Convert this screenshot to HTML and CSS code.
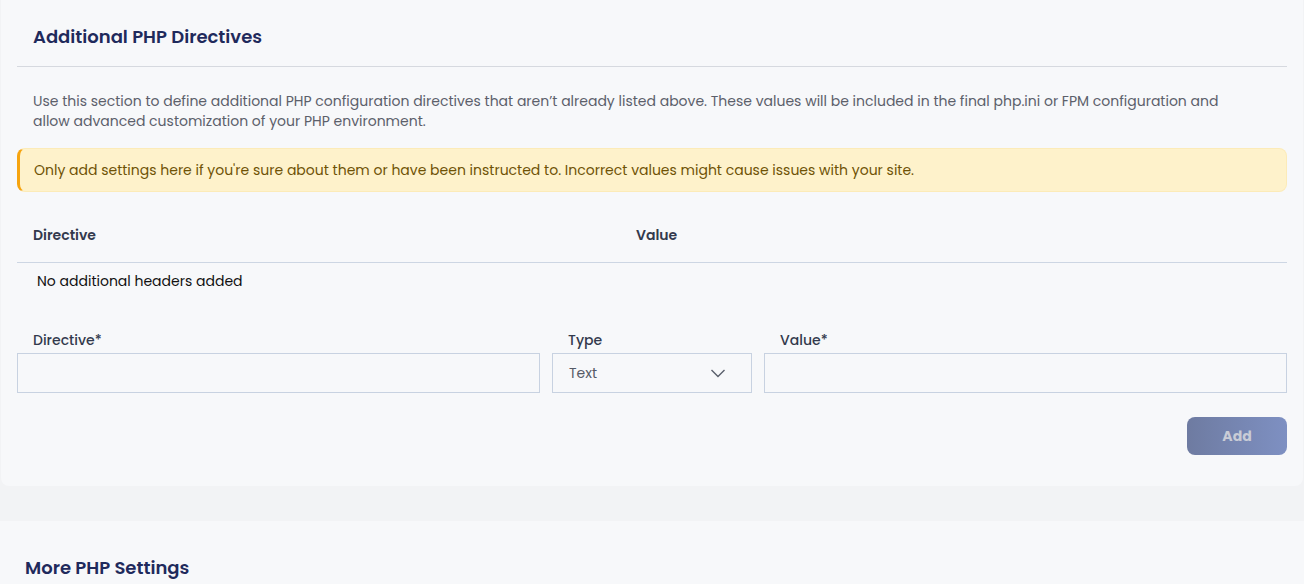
FILE: index.html
```html
<!DOCTYPE html>
<html lang="en">

<head>
    <meta charset="UTF-8">
    <meta name="viewport" content="width=device-width, initial-scale=1.0">
    <title>PHP Settings</title>
    <link rel="stylesheet" href="styles.css">
</head>

<body>
    <div class="card">
        <div class="card-head">
            <h2>Additional PHP Directives</h2>
        </div>

        <p class="desc">Use this section to define additional PHP configuration directives that aren’t already listed above. These values will be included in the final php.ini or FPM configuration and<br>allow advanced customization of your PHP environment.</p>

        <div class="alert">Only add settings here if you're sure about them or have been instructed to. Incorrect values might cause issues with your site.</div>

        <div class="table-head">
            <div>Directive</div>
            <div>Value</div>
        </div>
        <div class="empty">No additional headers added</div>

        <div class="form">
            <div class="field">
                <label>Directive*</label>
                <input type="text" class="input">
            </div>
            <div class="field">
                <label>Type</label>
                <div class="select">
                    <span>Text</span>
                    <svg width="18" height="18" viewBox="0 0 18 18">
                        <path d="M2.5 6 L9 12.5 L15.5 6" fill="none" stroke="#5a5f6b" stroke-width="1.4" />
                    </svg>
                </div>
            </div>
            <div class="field">
                <label>Value*</label>
                <input type="text" class="input">
            </div>
        </div>

        <div class="actions">
            <button class="btn">Add</button>
        </div>
    </div>

    <div class="card2">
        <h2>More PHP Settings</h2>
    </div>
</body>

</html>
```

FILE: styles.css
```css
body {
    margin: 0;
    background-color: #f2f3f5;
    font-family: "Poppins", "Open Sans", sans-serif;
    font-size: 14px;
    color: #333a4d;
}

h2 {
    margin: 0;
    font-size: 18px;
    line-height: 24px;
    font-weight: 600;
    color: #1f2a5c;
}

.card {
    margin: 0 1px;
    padding: 0 16px 31px;
    background-color: #f7f8fa;
    border-radius: 0 0 8px 8px;
}

.card-head {
    padding: 25px 16px 17px;
    border-bottom: 1px solid #d6d9df;
}

.desc {
    margin: 0;
    padding: 24px 16px 0;
    line-height: 20px;
    color: #5c606b;
}

.alert {
    margin-top: 17px;
    padding: 11px 13px 11px 14px;
    line-height: 20px;
    background-color: #fef2cb;
    border: 1px solid #fcebb8;
    border-left: 3px solid #f6a40f;
    border-radius: 8px;
    color: #6f5206;
}

.table-head {
    display: grid;
    grid-template-columns: 603px 1fr;
    margin-top: 20px;
    padding: 12px 16px 16px;
    line-height: 22px;
    font-weight: 600;
    color: #333a4d;
    border-bottom: 1px solid #cdd6e3;
}

.empty {
    padding: 8px 20px;
    line-height: 20px;
    color: #111;
}

.form {
    display: grid;
    grid-template-columns: 523px 200px 1fr;
    gap: 12px;
    margin-top: 31px;
}

.field label {
    display: block;
    padding-left: 16px;
    margin-bottom: 3px;
    line-height: 20px;
    font-weight: 500;
    color: #333a4d;
}

.input,
.select {
    box-sizing: border-box;
    width: 100%;
    height: 40px;
    margin: 0;
    border: 1px solid #c8d2e1;
    background-color: #f7f8fa;
    font-family: inherit;
    font-size: 14px;
}

.select {
    display: flex;
    align-items: center;
    justify-content: space-between;
    padding: 0 24px 0 16px;
    color: #555a66;
}

.actions {
    display: flex;
    justify-content: flex-end;
    margin-top: 24px;
}

.btn {
    width: 100px;
    height: 38px;
    border: none;
    border-radius: 8px;
    background: linear-gradient(90deg, #6e7ba1, #7e90c2);
    color: #c9ccd6;
    font-family: inherit;
    font-size: 14px;
    font-weight: 700;
}

.card2 {
    margin-top: 35px;
    padding: 35px 25px 20px;
    background-color: #f7f8fa;
}
```
